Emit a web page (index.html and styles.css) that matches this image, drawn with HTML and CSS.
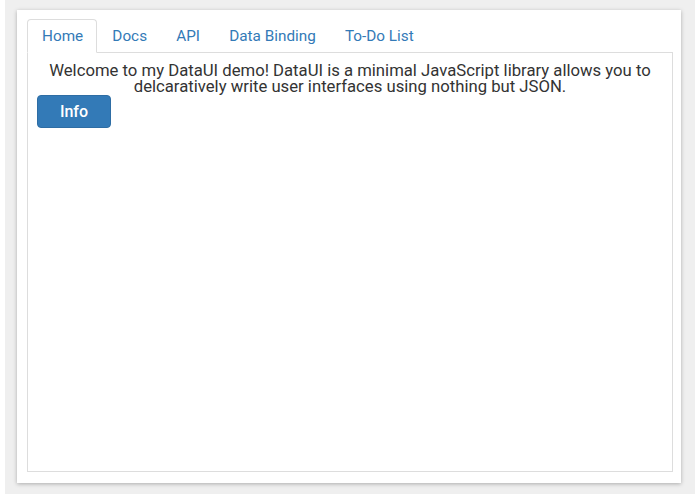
FILE: index.html
```html
<!DOCTYPE html>
<html>
<head>
<meta charset="utf-8">
<link rel="stylesheet" href="styles.css">
</head>
<body>
<div class="stage">
  <div class="card">
    <ul class="tabs">
      <li class="tab active">Home</li>
      <li class="tab">Docs</li>
      <li class="tab">API</li>
      <li class="tab">Data Binding</li>
      <li class="tab">To-Do List</li>
    </ul>
    <div class="panel">
      <p class="intro">Welcome to my DataUI demo! DataUI is a minimal JavaScript library allows you to delcaratively write user interfaces using nothing but JSON.</p>
      <button class="btn">Info</button>
    </div>
  </div>
</div>
</body>
</html>
```
FILE: styles.css
```css
html, body {
  margin: 0;
  padding: 0;
  height: 100%;
  background: #ffffff;
}
body {
  font-family: Roboto, "Liberation Sans", sans-serif;
  color: #333333;
}
.stage {
  margin-left: 5px;
  height: 494px;
  background: #efefef;
  padding: 10px 8px 0 12px;
  box-sizing: border-box;
}
.card {
  width: 664px;
  height: 473px;
  background: #ffffff;
  box-shadow: 0 1px 4px rgba(0, 0, 0, 0.28);
  padding: 9px 8px 11px 10px;
  box-sizing: border-box;
  display: flex;
  flex-direction: column;
}
.tabs {
  list-style: none;
  margin: 0;
  padding: 0;
  display: flex;
  border-bottom: 1px solid #dddddd;
}
.tab {
  font-size: 15.3px;
  line-height: 17px;
  padding: 8px 12.6px 7px;
  margin-right: 2px;
  margin-bottom: -1px;
  color: #337ab7;
  border: 1px solid transparent;
  border-radius: 4px 4px 0 0;
}
.tab.active {
  padding-left: 14px;
  color: #337ab7;
  background: #ffffff;
  border-color: #dddddd;
  border-bottom-color: #ffffff;
}
.panel {
  flex: 1;
  border: 1px solid #dddddd;
  border-top: none;
  padding: 10px 9px;
}
.intro {
  margin: 0;
  text-align: center;
  font-size: 16.7px;
  line-height: 16px;
  color: #333333;
}
.btn {
  display: block;
  margin-top: 0;
  width: 74px;
  height: 33px;
  background: #337ab7;
  border: 1px solid #2e6da4;
  border-radius: 4px;
  color: #ffffff;
  font-family: Roboto, "Liberation Sans", sans-serif;
  font-size: 16px;
  font-weight: 500;
  padding: 0;
}
```
